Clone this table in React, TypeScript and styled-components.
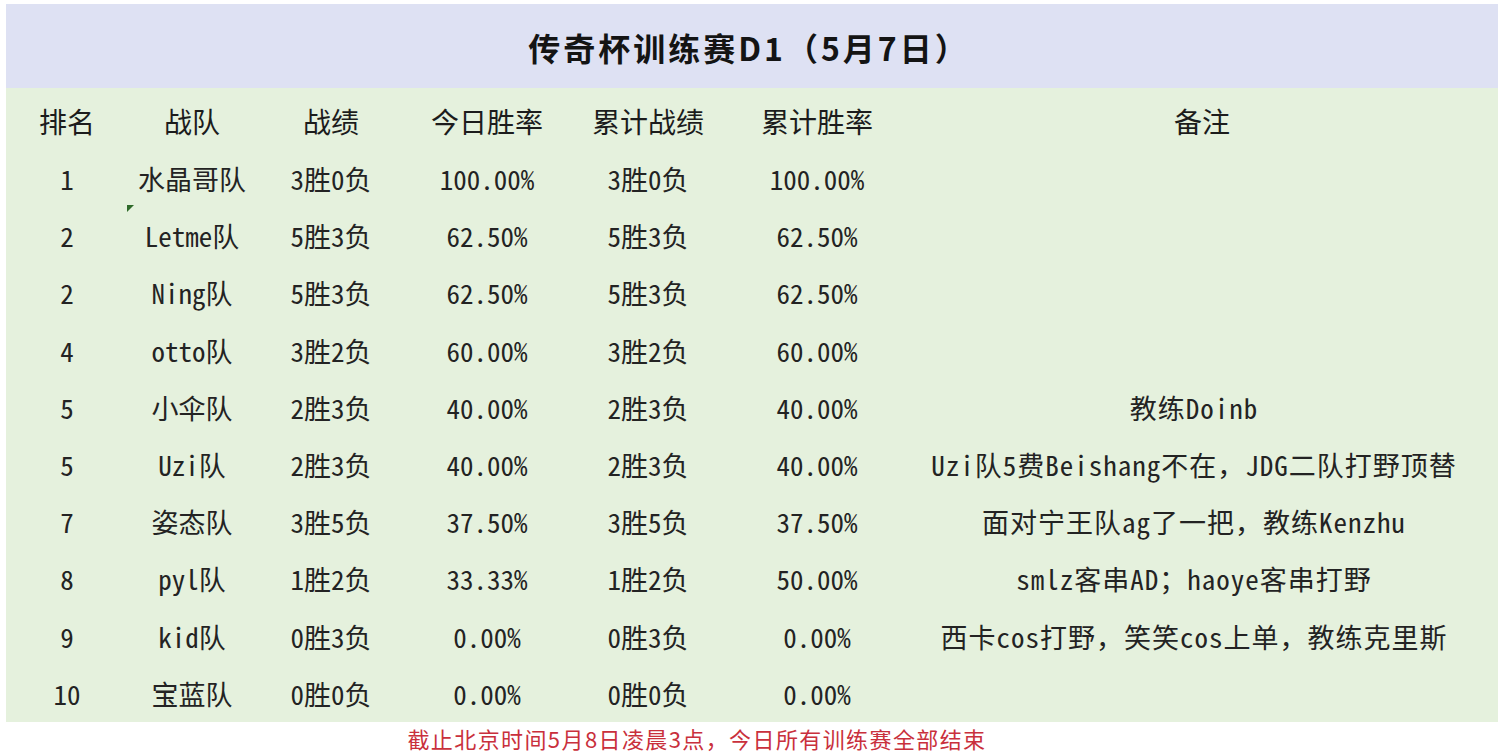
import React from "react";
import styled, { createGlobalStyle } from "styled-components";

interface TeamRow {
  rank: string;
  team: string;
  record: string;
  todayRate: string;
  total: string;
  totalRate: string;
  note?: string;
  flagged?: boolean;
}

const headers = ["排名", "战队", "战绩", "今日胜率", "累计战绩", "累计胜率", "备注"];

const rows: TeamRow[] = [
  { rank: "1", team: "水晶哥队", record: "3胜0负", todayRate: "100.00%", total: "3胜0负", totalRate: "100.00%" },
  { rank: "2", team: "Letme队", record: "5胜3负", todayRate: "62.50%", total: "5胜3负", totalRate: "62.50%", flagged: true },
  { rank: "2", team: "Ning队", record: "5胜3负", todayRate: "62.50%", total: "5胜3负", totalRate: "62.50%" },
  { rank: "4", team: "otto队", record: "3胜2负", todayRate: "60.00%", total: "3胜2负", totalRate: "60.00%" },
  { rank: "5", team: "小伞队", record: "2胜3负", todayRate: "40.00%", total: "2胜3负", totalRate: "40.00%", note: "教练Doinb" },
  { rank: "5", team: "Uzi队", record: "2胜3负", todayRate: "40.00%", total: "2胜3负", totalRate: "40.00%", note: "Uzi队5费Beishang不在，JDG二队打野顶替" },
  { rank: "7", team: "姿态队", record: "3胜5负", todayRate: "37.50%", total: "3胜5负", totalRate: "37.50%", note: "面对宁王队ag了一把，教练Kenzhu" },
  { rank: "8", team: "pyl队", record: "1胜2负", todayRate: "33.33%", total: "1胜2负", totalRate: "50.00%", note: "smlz客串AD；haoye客串打野" },
  { rank: "9", team: "kid队", record: "0胜3负", todayRate: "0.00%", total: "0胜3负", totalRate: "0.00%", note: "西卡cos打野，笑笑cos上单，教练克里斯" },
  { rank: "10", team: "宝蓝队", record: "0胜0负", todayRate: "0.00%", total: "0胜0负", totalRate: "0.00%" },
];

const GlobalStyle = createGlobalStyle`
  html, body {
    margin: 0;
    padding: 0;
    background: #ffffff;
  }
  body {
    font-family: "Noto Sans Mono CJK SC", "Noto Sans CJK SC", "Liberation Mono", monospace;
  }
`;

const App: React.FC = () => {
  return (
    <>
      <GlobalStyle />
      <Sheet>
        <TitleBar>传奇杯训练赛D1（5月7日）</TitleBar>
        <Table>
          {headers.map((h) => (
            <HeadCell key={h}>{h}</HeadCell>
          ))}
          {rows.map((r, i) => (
            <React.Fragment key={i}>
              <Cell>{r.rank}</Cell>
              <Cell>
                {r.flagged && <Marker />}
                {r.team}
              </Cell>
              <Cell>{r.record}</Cell>
              <Cell>{r.todayRate}</Cell>
              <Cell>{r.total}</Cell>
              <Cell>{r.totalRate}</Cell>
              <Cell $note>{r.note || ""}</Cell>
            </React.Fragment>
          ))}
        </Table>
        <Footer>
          <Notice>截止北京时间5月8日凌晨3点，今日所有训练赛全部结束</Notice>
        </Footer>
      </Sheet>
    </>
  );
};

const Sheet = styled.div`
  width: 1498px;
  height: 755px;
  padding: 4px 0 0 6px;
  box-sizing: border-box;
  display: flex;
  flex-direction: column;
  background: #ffffff;
`;

const TitleBar = styled.div`
  flex-shrink: 0;
  height: 84px;
  background: #dee1f3;
  display: flex;
  align-items: center;
  justify-content: center;
  padding: 2px 6px 0 0;
  box-sizing: border-box;
  font-family: "Noto Sans CJK SC", sans-serif;
  font-weight: 700;
  font-size: 32px;
  letter-spacing: 3px;
  color: #141414;
`;

const Table = styled.div`
  flex-shrink: 0;
  display: grid;
  grid-template-columns: 122px 128px 150px 162px 160px 178px 1fr;
  grid-template-rows: 62px repeat(10, 57.2px);
  background: #e5f1dd;
`;

const HeadCell = styled.div`
  display: flex;
  align-items: center;
  justify-content: center;
  padding-top: 3px;
  font-size: 28px;
  color: #1c1c1c;
`;

const Cell = styled.div<{ $note?: boolean }>`
  position: relative;
  display: flex;
  align-items: center;
  justify-content: center;
  padding-right: ${(p) => (p.$note ? "16px" : "0")};
  font-size: 27px;
  letter-spacing: ${(p) => (p.$note ? "1px" : "0")};
  color: #232323;
  white-space: nowrap;
`;

const Marker = styled.span`
  position: absolute;
  left: -1px;
  top: -2px;
  width: 0;
  height: 0;
  border-top: 7px solid #2f6a2a;
  border-right: 7px solid transparent;
`;

const Footer = styled.div`
  flex: 1;
  min-height: 0;
  display: flex;
  align-items: flex-start;
  justify-content: center;
  padding-right: 110px;
  background: #ffffff;
`;

const Notice = styled.div`
  font-family: "Noto Sans CJK SC", sans-serif;
  font-size: 22px;
  letter-spacing: 1.4px;
  color: #c9303c;
`;

export default App;
